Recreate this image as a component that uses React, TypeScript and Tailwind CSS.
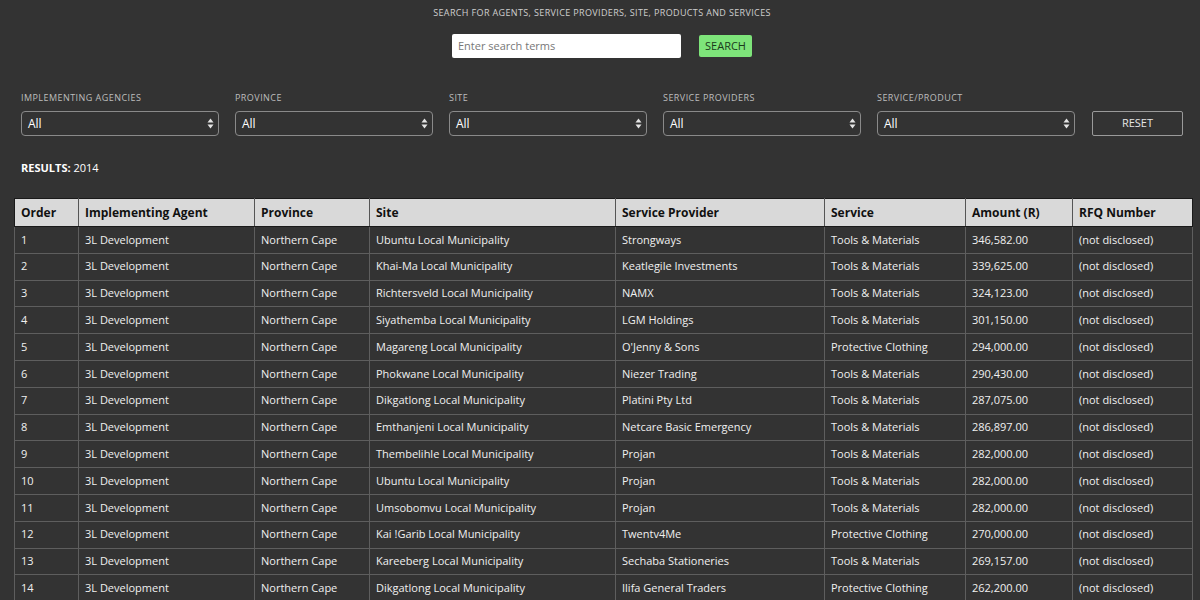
import React from "react";

const rows: [string, string, string, string, string, string, string, string][] = [
  ["1", "3L Development", "Northern Cape", "Ubuntu Local Municipality", "Strongways", "Tools & Materials", "346,582.00", "(not disclosed)"],
  ["2", "3L Development", "Northern Cape", "Khai-Ma Local Municipality", "Keatlegile Investments", "Tools & Materials", "339,625.00", "(not disclosed)"],
  ["3", "3L Development", "Northern Cape", "Richtersveld Local Municipality", "NAMX", "Tools & Materials", "324,123.00", "(not disclosed)"],
  ["4", "3L Development", "Northern Cape", "Siyathemba Local Municipality", "LGM Holdings", "Tools & Materials", "301,150.00", "(not disclosed)"],
  ["5", "3L Development", "Northern Cape", "Magareng Local Municipality", "O'Jenny & Sons", "Protective Clothing", "294,000.00", "(not disclosed)"],
  ["6", "3L Development", "Northern Cape", "Phokwane Local Municipality", "Niezer Trading", "Tools & Materials", "290,430.00", "(not disclosed)"],
  ["7", "3L Development", "Northern Cape", "Dikgatlong Local Municipality", "Platini Pty Ltd", "Tools & Materials", "287,075.00", "(not disclosed)"],
  ["8", "3L Development", "Northern Cape", "Emthanjeni Local Municipality", "Netcare Basic Emergency", "Tools & Materials", "286,897.00", "(not disclosed)"],
  ["9", "3L Development", "Northern Cape", "Thembelihle Local Municipality", "Projan", "Tools & Materials", "282,000.00", "(not disclosed)"],
  ["10", "3L Development", "Northern Cape", "Ubuntu Local Municipality", "Projan", "Tools & Materials", "282,000.00", "(not disclosed)"],
  ["11", "3L Development", "Northern Cape", "Umsobomvu Local Municipality", "Projan", "Tools & Materials", "282,000.00", "(not disclosed)"],
  ["12", "3L Development", "Northern Cape", "Kai !Garib Local Municipality", "Twentv4Me", "Protective Clothing", "270,000.00", "(not disclosed)"],
  ["13", "3L Development", "Northern Cape", "Kareeberg Local Municipality", "Sechaba Stationeries", "Tools & Materials", "269,157.00", "(not disclosed)"],
  ["14", "3L Development", "Northern Cape", "Dikgatlong Local Municipality", "Ilifa General Traders", "Protective Clothing", "262,200.00", "(not disclosed)"],
];

const headers = ["Order", "Implementing Agent", "Province", "Site", "Service Provider", "Service", "Amount (R)", "RFQ Number"];
const widths = ["w-[64px]", "w-[176px]", "w-[115px]", "w-[246px]", "w-[209px]", "w-[141px]", "w-[107px]", "w-[120px]"];

function Arrows() {
  return (
    <svg width="7" height="11" viewBox="0 0 7 11" className="shrink-0">
      <path d="M3.5 0.5 L6.5 4.5 L0.5 4.5 Z" fill="#e5e5e5" />
      <path d="M3.5 10.5 L6.5 6.5 L0.5 6.5 Z" fill="#e5e5e5" />
    </svg>
  );
}

function Filter({ label }: { label: string }) {
  return (
    <div className="flex flex-col w-[198px]">
      <div className="text-[9px] tracking-[0.05em] text-[#bdbdbd] uppercase leading-[12px] h-[12px] mb-[7px]">{label}</div>
      <div className="h-[25px] border border-[#8a8a8a] rounded-[4px] flex items-center justify-between pl-[6px] pr-[4px]">
        <span className="text-[12px] text-white leading-none">All</span>
        <Arrows />
      </div>
    </div>
  );
}

export default function App() {
  return (
    <div className="w-[1200px] h-[600px] overflow-hidden bg-[#333333] text-[#eeeeee]" style={{ fontFamily: '"Open Sans", "Liberation Sans", sans-serif' }}>
      <div className="flex flex-col items-center pt-[6px]">
        <div className="text-[9px] tracking-[0.04em] text-[#cfcfcf] uppercase leading-[14px] ml-[4px]">
          Search for agents, service providers, site, products and services
        </div>
        <div className="flex items-center mt-[14px] ml-[4px]">
          <div className="w-[229px] h-[24px] bg-white rounded-[2px] flex items-center px-[6px] text-[11px] text-[#777]">
            Enter search terms
          </div>
          <div className="ml-[18px] w-[53px] h-[22px] bg-[#7ee47a] rounded-[2px] flex items-center justify-center text-[11px] text-[#1a3a1a]">
            SEARCH
          </div>
        </div>
      </div>

      <div className="flex items-end pl-[21px] mt-[34px] gap-[16px]">
        <Filter label="Implementing Agencies" />
        <Filter label="Province" />
        <Filter label="Site" />
        <Filter label="Service Providers" />
        <Filter label="Service/Product" />
        <div className="ml-[1px] w-[91px] h-[25px] border border-[#9a9a9a] rounded-[2px] flex items-center justify-center text-[11px] text-[#e5e5e5]">
          RESET
        </div>
      </div>

      <div className="pl-[21px] mt-[25px] text-[11px] text-white leading-[14px]">
        <span className="font-bold">RESULTS:</span> 2014
      </div>

      <div className="pl-[14px] mt-[23px]">
        <table className="border-collapse table-fixed w-[1178px] text-[11px]">
          <thead>
            <tr className="h-[28px] bg-[#d9d9d9] text-[#111]">
              {headers.map((h, i) => (
                <th key={h} className={`${widths[i]} text-left font-bold text-[12px] px-[6px] border-y-[1.5px] border-y-[#1a1a1a] border-x border-x-[#555] first:border-l-[#1a1a1a] last:border-r-[#1a1a1a]`}>
                  {h}
                </th>
              ))}
            </tr>
          </thead>
          <tbody>
            {rows.map((r) => (
              <tr key={r[0]} className="h-[26.8px]">
                {r.map((c, i) => (
                  <td key={i} className="px-[6px] border border-[#5e5e5e] text-[#f0f0f0] whitespace-nowrap">
                    {c}
                  </td>
                ))}
              </tr>
            ))}
          </tbody>
        </table>
      </div>
    </div>
  );
}
